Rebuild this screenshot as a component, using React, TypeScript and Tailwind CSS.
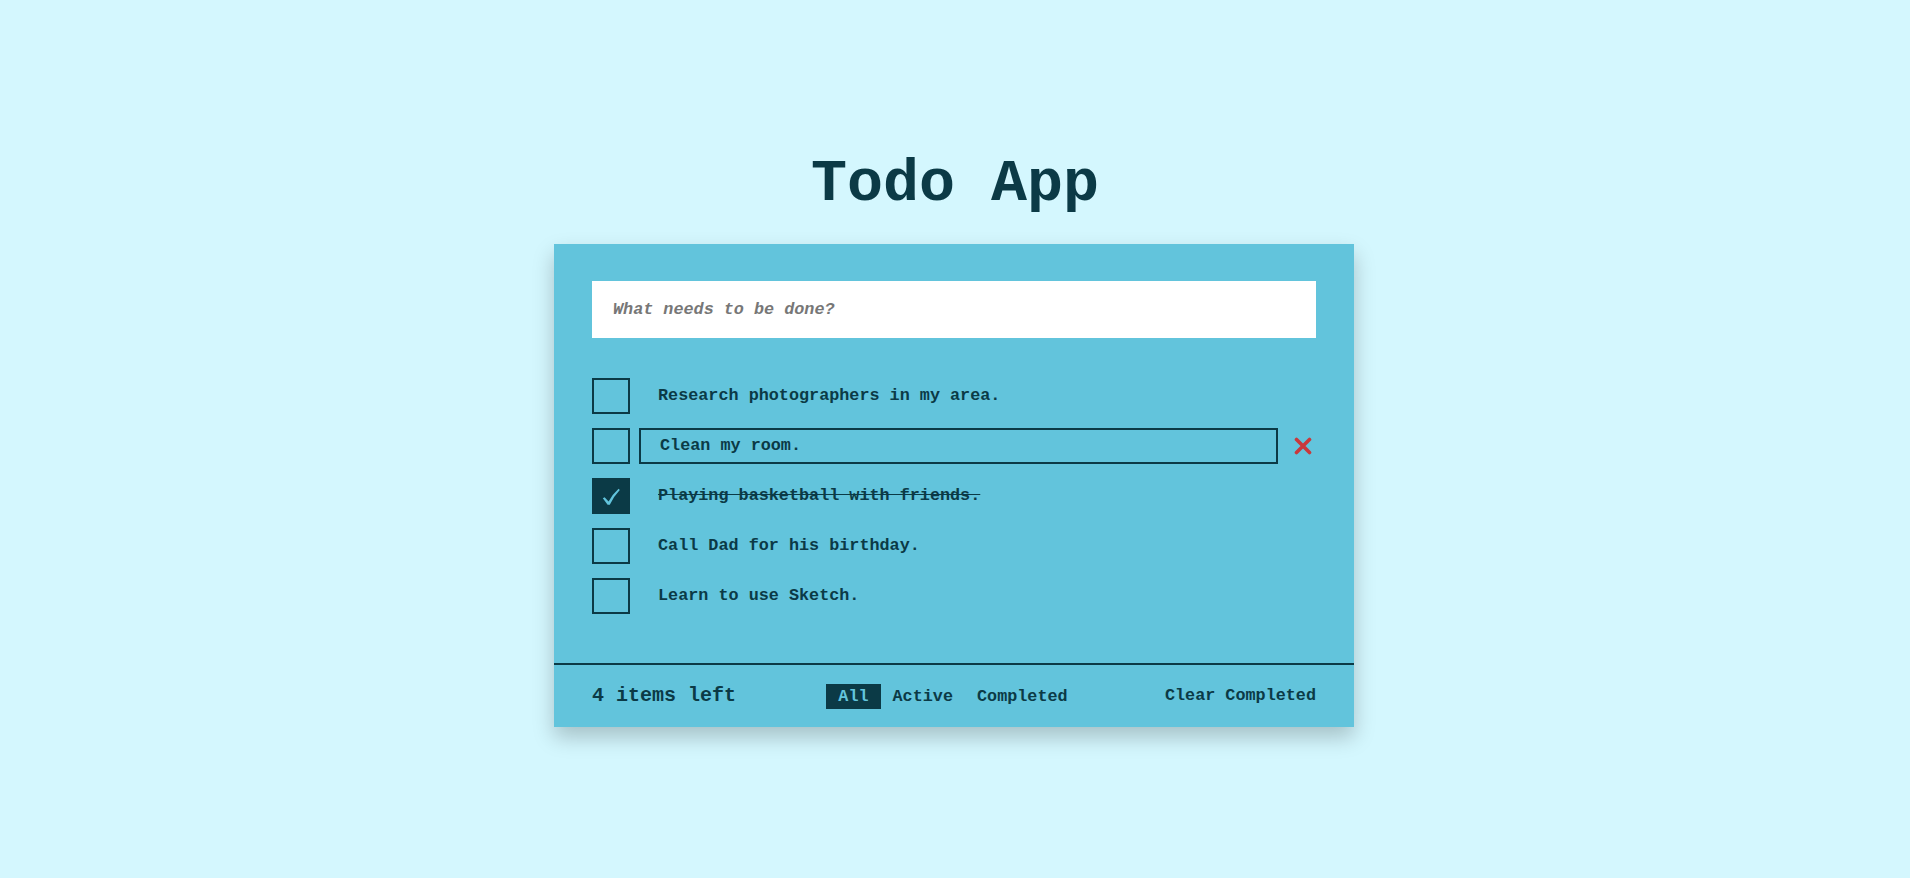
import React from "react";

const todos = [
  { text: "Research photographers in my area.", done: false, editing: false },
  { text: "Clean my room.", done: false, editing: true },
  { text: "Playing basketball with friends.", done: true, editing: false },
  { text: "Call Dad for his birthday.", done: false, editing: false },
  { text: "Learn to use Sketch.", done: false, editing: false },
];

export default function App() {
  return (
    <div
      className="min-h-screen w-full bg-[#d4f7fe] flex flex-col items-center pt-[154px] text-[#0b3a46] font-bold"
      style={{ fontFamily: '"Liberation Mono", "Courier New", monospace' }}
    >
      <h1 className="text-[60px] leading-none font-bold mb-[30px]">Todo App</h1>
      <div className="w-[800px] mr-[2px] bg-[#62c4dc] shadow-[0_10px_20px_rgba(0,0,0,0.22)]">
        <div className="px-[38px] pt-[37px] pb-[49px]">
          <input
            className="w-full h-[57px] bg-white pl-[21px] text-[16.8px] font-bold italic outline-none placeholder:text-[#777777] placeholder:italic"
            placeholder="What needs to be done?"
          />
          <ul className="mt-[40px] flex flex-col gap-[14px]">
            {todos.map((t, i) => (
              <li key={i} className="flex items-center h-[36px]">
                <div
                  className={
                    "w-[38px] h-[36px] shrink-0 border-2 border-[#0b3a46] flex items-center justify-center " +
                    (t.done ? "bg-[#0b3a46]" : "")
                  }
                >
                  {t.done && (
                    <svg width="20" height="18" viewBox="0 0 20 18" className="mt-[1px]">
                      <path
                        d="M1.8 10.2 L3.6 9.2 L7.6 13.6 Q11.5 6.2 17.6 0.8 L18.8 2 Q12.8 8.2 8.8 16.8 L6.6 16.8 Z"
                        fill="#62c4dc"
                      />
                    </svg>
                  )}
                </div>
                <div
                  className={
                    "flex-1 ml-[9px] h-[36px] border-2 flex items-center text-[16.8px] " +
                    (t.editing ? "border-[#0b3a46] pl-[19px]" : "border-transparent pl-[17px]") +
                    (t.done ? " line-through" : "")
                  }
                >
                  {t.text}
                </div>
                <div className="w-[38px] h-[36px] shrink-0 flex items-center pl-[16px]">
                  {t.editing && (
                    <svg width="18" height="18" viewBox="0 0 18 18">
                      <path
                        d="M2.5 2.5 L15.5 15.5 M15.5 2.5 L2.5 15.5"
                        stroke="#c9393c"
                        strokeWidth="3.6"
                        strokeLinecap="round"
                      />
                    </svg>
                  )}
                </div>
              </li>
            ))}
          </ul>
        </div>
        <div className="border-t-2 border-[#0b3a46] h-[64px] px-[38px] flex items-center justify-between">
          <span className="text-[20px]">4 items left</span>
          <div className="flex items-center text-[16.8px] ml-[5px]">
            <span className="px-[12px] h-[25px] leading-[25px] bg-[#0b3a46] text-[#62c4dc]">All</span>
            <span className="px-[12px] h-[25px] leading-[25px]">Active</span>
            <span className="px-[12px] h-[25px] leading-[25px]">Completed</span>
          </div>
          <span className="text-[16.8px]">Clear Completed</span>
        </div>
      </div>
    </div>
  );
}
